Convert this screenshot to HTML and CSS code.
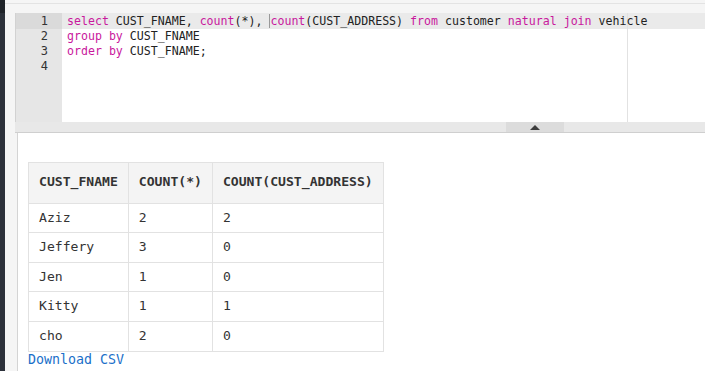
FILE: index.html
```html
<!DOCTYPE html>
<html lang="en">
<head>
  <meta charset="UTF-8">
  <title>SQL Query</title>
  <link rel="stylesheet" href="styles.css">
</head>
<body>
  <div class="sidebar">
    <div class="sidebar-top"></div>
  </div>

  <div class="workspace">
    <div class="editor">
      <div class="gutter">
        <div class="num active">1</div>
        <div class="num">2</div>
        <div class="num">3</div>
        <div class="num">4</div>
      </div>
      <div class="code">
        <div class="print-margin"></div>
        <div class="line active"><span class="kw">select</span> CUST_FNAME, <span class="kw">count</span>(*), <span class="cursor"></span><span class="kw">count</span>(CUST_ADDRESS) <span class="kw">from</span> customer <span class="kw">natural</span> <span class="kw">join</span> vehicle</div>
        <div class="line"><span class="kw">group</span> <span class="kw">by</span> CUST_FNAME</div>
        <div class="line"><span class="kw">order</span> <span class="kw">by</span> CUST_FNAME;</div>
        <div class="line"></div>
      </div>
    </div>

    <div class="resize-bar">
      <div class="handle"><span class="arrow"></span></div>
    </div>

    <div class="results">
      <table class="result-table">
        <thead>
          <tr>
            <th>CUST_FNAME</th>
            <th>COUNT(*)</th>
            <th>COUNT(CUST_ADDRESS)</th>
          </tr>
        </thead>
        <tbody>
          <tr><td>Aziz</td><td>2</td><td>2</td></tr>
          <tr><td>Jeffery</td><td>3</td><td>0</td></tr>
          <tr><td>Jen</td><td>1</td><td>0</td></tr>
          <tr><td>Kitty</td><td>1</td><td>1</td></tr>
          <tr><td>cho</td><td>2</td><td>0</td></tr>
        </tbody>
      </table>
      <a class="download" href="#">Download CSV</a>
    </div>
  </div>
</body>
</html>
```

FILE: styles.css
```css
* {
  box-sizing: border-box;
  margin: 0;
  padding: 0;
}

body {
  display: flex;
  height: 371px;
  overflow: hidden;
  background-color: #f5f5f5;
  font-family: 'DejaVu Sans Mono', monospace;
  color: #333;
}

.sidebar {
  width: 5px;
  flex-shrink: 0;
  background-color: #2c313a;
}

.sidebar-top {
  height: 13px;
  background-color: #1f2329;
}

.workspace {
  flex: 1;
  min-width: 0;
  padding: 9px 0 0 10px;
  border-top: 1px solid #e3e3e3;
  margin-top: 3px;
  display: flex;
  flex-direction: column;
}

/* editor */
.editor {
  display: flex;
  height: 109px;
  font-size: 11.6px;
}

.gutter {
  width: 47px;
  flex-shrink: 0;
  background-color: #e6e6e6;
  border-left: 1px solid #d2d2d2;
  text-align: right;
}

.num {
  height: 15px;
  line-height: 15px;
  padding-right: 14px;
  font-size: 12px;
  color: #333;
}

.num.active,
.line.active {
  height: 16px;
  padding-top: 1px;
}

.num.active {
  background-color: #dadada;
}

.code {
  flex: 1;
  position: relative;
  background-color: #fff;
}

.line {
  position: relative;
  height: 15px;
  line-height: 15px;
  padding-left: 5px;
  white-space: pre;
  color: #222;
}

.line.active {
  background-color: rgba(225, 225, 225, 0.7);
}

.kw {
  color: #c9189d;
}

.cursor {
  display: inline-block;
  width: 0;
  height: 14px;
  vertical-align: -3px;
  border-left: 1px solid #999;
}

.print-margin {
  position: absolute;
  top: 0;
  bottom: 0;
  left: 565px;
  border-left: 1px solid #e2e2e2;
}

/* resize bar */
.resize-bar {
  height: 11px;
  background-color: #e8e8e8;
  border-bottom: 1px solid #cfcfcf;
  display: flex;
  padding-left: 491px;
}

.handle {
  width: 58px;
  background-color: #dcdcdc;
  display: flex;
  align-items: center;
  justify-content: center;
}

.arrow {
  width: 0;
  height: 0;
  border-left: 5px solid transparent;
  border-right: 5px solid transparent;
  border-bottom: 5px solid #3c3c3c;
}

/* results */
.results {
  flex: 1;
  margin-left: 2px;
  background-color: #fff;
  border-left: 1px solid #d4d4d4;
  padding: 29px 0 0 10px;
  font-size: 13.1px;
}

.result-table {
  border-collapse: collapse;
  border: 1px solid #e2e2e2;
}

.result-table th,
.result-table td {
  border: 1px solid #e2e2e2;
  padding: 7px 10px;
  text-align: left;
  line-height: 14.6px;
  color: #333;
}

.result-table th {
  background-color: #f4f4f4;
  padding-top: 12px;
  padding-bottom: 13px;
  font-weight: bold;
}

.download {
  display: block;
  color: #1a6fc9;
  text-decoration: none;
  line-height: 16px;
  font-size: 13.3px;
}
```
